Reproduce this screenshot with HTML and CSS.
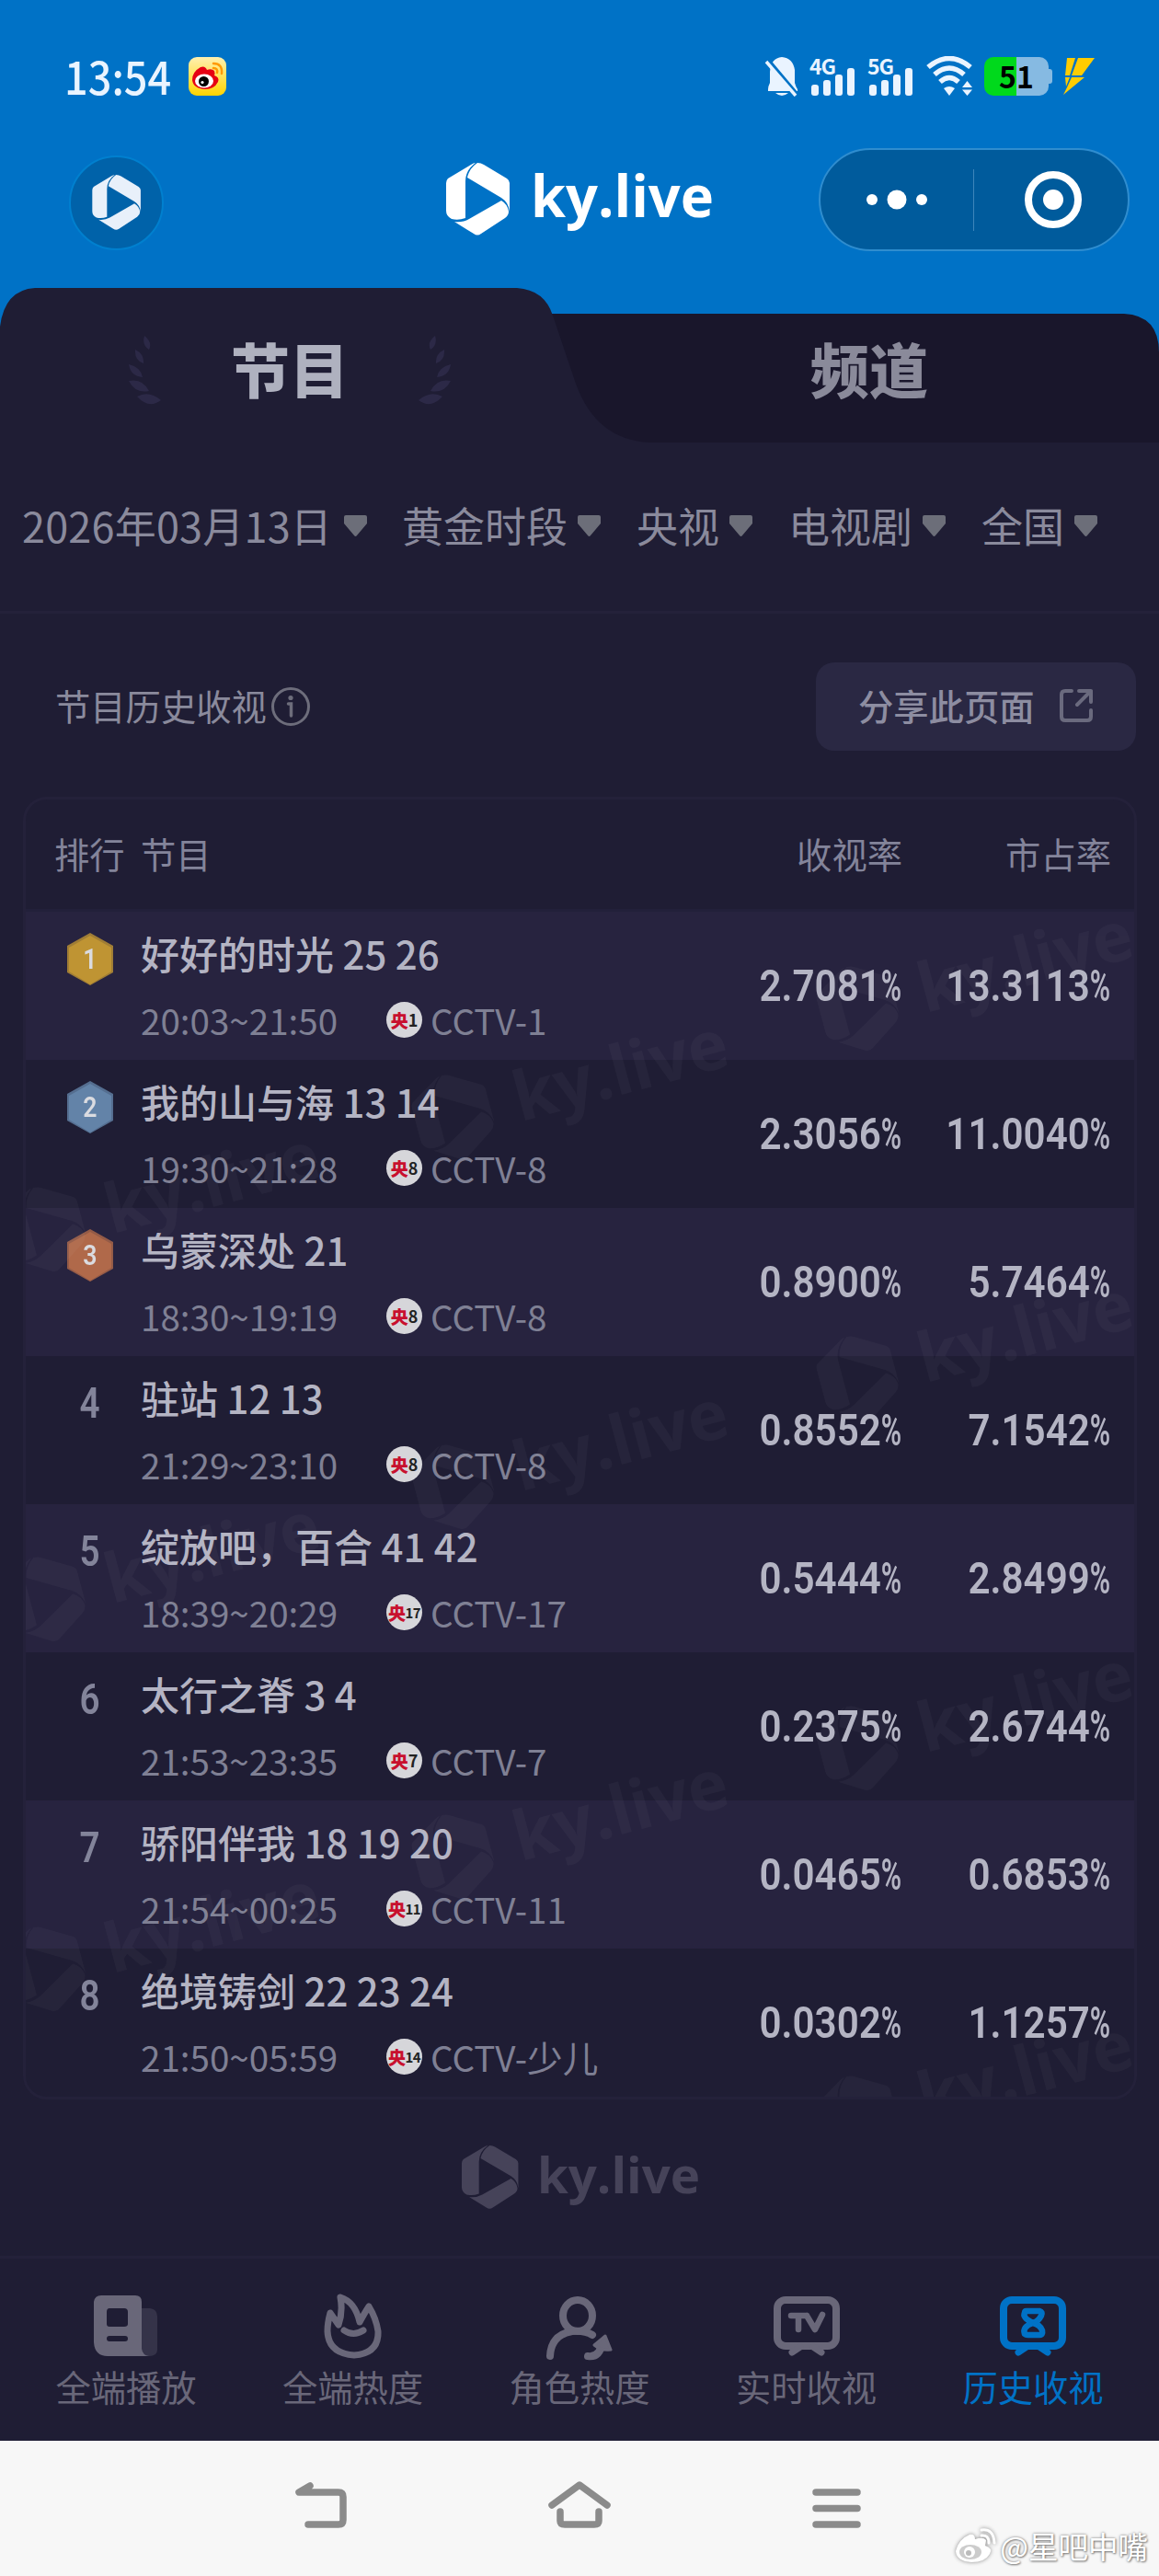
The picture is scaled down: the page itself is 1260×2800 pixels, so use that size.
FILE: index.html
```
<!DOCTYPE html>
<html lang="zh-CN">
<head>
    <meta charset="UTF-8">
    <meta name="viewport" content="width=device-width, initial-scale=1.0">
    <title>ky.live 历史收视</title>
    <link rel="stylesheet" href="styles.css">
</head>
<body>

    <!-- shared shapes -->
    <svg class="defs" width="0" height="0">
        <symbol id="mark" viewBox="0 0 70 80">
            <path d="M0 22Q0 19 2 17L27 2Q30 0 32 0Q21 8 21 20V60Q13 63 6 61Q0 58 0 52Z"/>
            <path d="M34 0Q38 0 41 2L66 17Q69 19 69 22V53Q68 43 60 38L23 16Q25 6 34 0Z"/>
            <path d="M60 41Q67 45 68 53Q68 57 64 60L38 77Q34 80 30 77L9 64Q18 65 25 61Z"/>
        </symbol>
        <symbol id="logo" viewBox="0 0 292 80">
            <use href="#mark" width="70" height="80"/>
            <text class="logo-text" x="92" y="59" textLength="199" lengthAdjust="spacingAndGlyphs">ky.live</text>
        </symbol>
        <symbol id="laurel" viewBox="0 0 36 76">
            <path d="M17 0q9 7 5 15q-8-5-5-15zM7 15q10 5 9 15Q6 27 7 15zM0 31q13 3 15 14Q2 44 0 31zM0 49q15-3 22 11Q7 63 0 49zM9 66q13-7 26 4Q22 80 9 66z"/>
        </symbol>
        <symbol id="hex" viewBox="0 0 52 58">
            <path class="hex-edge" d="M26 0L51 14V43L26 57L1 43V14Z"/>
            <path d="M26 3L49 16V42L26 56L3 42V16Z"/>
        </symbol>
        <symbol id="drop" viewBox="0 0 25 24">
            <path d="M2 1H23Q25 1 25 3V10L14 23Q12.500 25 11 23L0 10V3Q0 1 2 1Z"/>
        </symbol>
        <symbol id="bars" viewBox="0 0 50 44">
            <rect x="2" y="31" width="8" height="12" rx="3"/>
            <rect x="15" y="26" width="8" height="17" rx="3"/>
            <rect x="28" y="20" width="8" height="23" rx="3"/>
            <rect x="41" y="13" width="8" height="30" rx="3"/>
        </symbol>
        <symbol id="tv" viewBox="0 0 72 66">
            <rect x="4" y="5" width="64" height="50" rx="9" fill="none" stroke-width="8"/>
            <path d="M20 62L29 56M52 62L43 56" fill="none" stroke-width="7" stroke-linecap="round"/>
        </symbol>
    </svg>

    <header>
        <div class="status">
            <span class="time">13:54</span>
            <svg class="weibo" width="41" height="42" viewBox="0 0 41 42">
                <defs>
                    <linearGradient id="gold" x1="0" y1="0" x2="0" y2="1">
                        <stop offset="0" stop-color="#fff0b0"/>
                        <stop offset="1" stop-color="#ffd400"/>
                    </linearGradient>
                </defs>
                <rect width="41" height="42" rx="9" fill="url(#gold)"/>
                <path d="M4 25Q4 16 13 11Q18 9 20 14Q25 12 28 15Q29 18 28 20Q34 22 32 27Q28 35 18 35Q5 34 4 25Z" fill="#e60012"/>
                <ellipse cx="17" cy="26" rx="10" ry="7.500" fill="#fff"/>
                <circle cx="16.500" cy="26.500" r="5.500"/>
                <circle cx="15" cy="27.500" r="1.600" fill="#fff"/>
                <path d="M27 7Q37 7 36 18M27 12Q32 12 31 17" fill="none" stroke="#f90" stroke-width="2.500" stroke-linecap="round"/>
            </svg>
            <div class="signals">
                <svg class="bell" width="38" height="44" viewBox="0 0 38 44">
                    <path d="M4 36Q4 33 6 29V17Q7 2 19 1Q31 2 33 15V29Q34 33 36 36V38H4ZM12 40H26Q19 46 12 40Z"/>
                    <path class="slash-gap" d="M4 4L36 42"/>
                    <path class="slash" d="M2 6L34 43"/>
                </svg>
                <span class="net"><b>4G</b><svg width="50" height="44"><use href="#bars"/></svg></span>
                <span class="net"><b>5G</b><svg width="50" height="44"><use href="#bars"/></svg></span>
                <svg class="wifi" width="54" height="44" viewBox="0 0 54 44">
                    <path d="M3 12Q26-7 49 12M10 20Q26 6 42 20M16 28Q26 19 36 28" fill="none" stroke="#eaf4ff" stroke-width="5.500"/>
                    <path d="M20 35Q26 31 32 35L26 43ZM40 34L45.500 27L51 34ZM40 36.500H51L45.500 43Z"/>
                </svg>
                <span class="battery">51</span>
                <svg width="36" height="42" viewBox="0 0 36 42" fill="#fc0">
                    <path d="M5 1H14L8 20H3ZM17 1H35L21 20H10ZM3 22H8L4 32ZM10 22H24L1 41L5 33Z"/>
                </svg>
            </div>
        </div>

        <div class="nav">
            <span class="avatar"><svg width="54" height="61"><use href="#mark"/></svg></span>
            <svg class="brand" width="292" height="80"><use href="#logo"/></svg>
            <div class="capsule">
                <svg width="66" height="24" viewBox="0 0 66 24">
                    <circle cx="6" cy="12" r="6"/>
                    <circle cx="33" cy="12" r="10.500"/>
                    <circle cx="60" cy="12" r="6"/>
                </svg>
                <i></i>
                <svg width="62" height="62" viewBox="0 0 62 62">
                    <circle cx="31" cy="31" r="27" fill="none" stroke="#fff" stroke-width="8"/>
                    <circle cx="31" cy="31" r="11"/>
                </svg>
            </div>
        </div>

        <div class="tabs">
            <svg class="tabs-bg" width="1260" height="168" viewBox="0 0 1260 168">
                <path fill="#19162b" d="M560 28H1222Q1260 30 1260 70V168H560Z"/>
                <path fill="#1f1d34" d="M0 168V42Q5 2 38 0H562Q592 2 601 30L626 104Q648 165 706 168Z"/>
            </svg>
            <div class="tab active">
                <svg width="36" height="76"><use href="#laurel"/></svg>
                <span>节目</span>
                <svg class="flip" width="36" height="76"><use href="#laurel"/></svg>
            </div>
            <div class="tab"><span>频道</span></div>
        </div>
    </header>

    <main>
        <div class="filters">
            <span class="date">2026年03月13日<svg width="25" height="24"><use href="#drop"/></svg></span>
            <span>黄金时段<svg width="25" height="24"><use href="#drop"/></svg></span>
            <span>央视<svg width="25" height="24"><use href="#drop"/></svg></span>
            <span>电视剧<svg width="25" height="24"><use href="#drop"/></svg></span>
            <span>全国<svg width="25" height="24"><use href="#drop"/></svg></span>
        </div>

        <div class="title-bar">
            <h2>节目历史收视</h2>
            <svg width="44" height="44" viewBox="0 0 44 44">
                <circle cx="22" cy="22" r="19.500" fill="none" stroke="#6d6d7b" stroke-width="3"/>
                <circle cx="22" cy="12.500" r="2.600" fill="#6d6d7b"/>
                <path d="M19.500 19H22.500V32" fill="none" stroke="#6d6d7b" stroke-width="3.500" stroke-linecap="round"/>
            </svg>
            <button class="share">
                分享此页面
                <svg width="38" height="38" viewBox="0 0 38 38">
                    <path d="M14 3H7Q3 3 3 7V31Q3 35 7 35H31Q35 35 35 31V24M22 3H35V15M35 3L20 18"/>
                </svg>
            </button>
        </div>

        <div class="table">
            <div class="thead">
                <span>排行</span>
                <span>节目</span>
                <span>收视率</span>
                <span>市占率</span>
            </div>
            <div class="row">
                <div class="rank medal gold"><svg width="52" height="58"><use href="#hex"/></svg><b>1</b></div>
                <div class="show">
                    <h3>好好的时光 25 26</h3>
                    <p><span>20:03~21:50</span><i class="badge"><b>央</b>1</i>CCTV-1</p>
                </div>
                <div class="num">2.7081<em>%</em></div>
                <div class="num">13.3113<em>%</em></div>
            </div>
            <div class="row">
                <div class="rank medal silver"><svg width="52" height="58"><use href="#hex"/></svg><b>2</b></div>
                <div class="show">
                    <h3>我的山与海 13 14</h3>
                    <p><span>19:30~21:28</span><i class="badge"><b>央</b>8</i>CCTV-8</p>
                </div>
                <div class="num">2.3056<em>%</em></div>
                <div class="num">11.0040<em>%</em></div>
            </div>
            <div class="row">
                <div class="rank medal bronze"><svg width="52" height="58"><use href="#hex"/></svg><b>3</b></div>
                <div class="show">
                    <h3>乌蒙深处 21</h3>
                    <p><span>18:30~19:19</span><i class="badge"><b>央</b>8</i>CCTV-8</p>
                </div>
                <div class="num">0.8900<em>%</em></div>
                <div class="num">5.7464<em>%</em></div>
            </div>
            <div class="row">
                <div class="rank">4</div>
                <div class="show">
                    <h3>驻站 12 13</h3>
                    <p><span>21:29~23:10</span><i class="badge"><b>央</b>8</i>CCTV-8</p>
                </div>
                <div class="num">0.8552<em>%</em></div>
                <div class="num">7.1542<em>%</em></div>
            </div>
            <div class="row">
                <div class="rank">5</div>
                <div class="show">
                    <h3>绽放吧，百合 41 42</h3>
                    <p><span>18:39~20:29</span><i class="badge two"><b>央</b>17</i>CCTV-17</p>
                </div>
                <div class="num">0.5444<em>%</em></div>
                <div class="num">2.8499<em>%</em></div>
            </div>
            <div class="row">
                <div class="rank">6</div>
                <div class="show">
                    <h3>太行之脊 3 4</h3>
                    <p><span>21:53~23:35</span><i class="badge"><b>央</b>7</i>CCTV-7</p>
                </div>
                <div class="num">0.2375<em>%</em></div>
                <div class="num">2.6744<em>%</em></div>
            </div>
            <div class="row">
                <div class="rank">7</div>
                <div class="show">
                    <h3>骄阳伴我 18 19 20</h3>
                    <p><span>21:54~00:25</span><i class="badge two"><b>央</b>11</i>CCTV-11</p>
                </div>
                <div class="num">0.0465<em>%</em></div>
                <div class="num">0.6853<em>%</em></div>
            </div>
            <div class="row">
                <div class="rank">8</div>
                <div class="show">
                    <h3>绝境铸剑 22 23 24</h3>
                    <p><span>21:50~05:59</span><i class="badge two"><b>央</b>14</i>CCTV-少儿</p>
                </div>
                <div class="num">0.0302<em>%</em></div>
                <div class="num">1.1257<em>%</em></div>
            </div>

            <!-- tiled watermark over the rows -->
            <svg class="watermark" width="1205" height="1288" viewBox="28 991 1205 1288">
                <g id="wm">
                    <use href="#logo" width="350" height="96" x="-42" y="-48" transform="translate(50 1337) rotate(-15)"/>
                    <use href="#logo" width="350" height="96" x="-42" y="-48" transform="translate(494 1215) rotate(-15)"/>
                    <use href="#logo" width="350" height="96" x="-42" y="-48" transform="translate(934 1097) rotate(-15)"/>
                </g>
                <use href="#wm" y="402"/>
                <use href="#wm" y="804"/>
                <use href="#wm" y="1206"/>
            </svg>
        </div>

        <div class="copyright"><svg width="260" height="70" viewBox="0 0 292 80" preserveAspectRatio="none"><use href="#logo" width="292" height="80"/></svg></div>
    </main>

    <nav class="tabbar">
        <a>
            <svg width="72" height="86" viewBox="0 0 72 86">
                <path d="M50 29H62Q70 30 70 38V74Q70 81 61 81H50Z" opacity=".3"/>
                <path fill-rule="evenodd" d="M9 15H46Q53 15 53 22V73Q54 80 61 81H16Q2 81 1 66V22Q2 15 9 15ZM18 29Q15 29 15 33V46Q15 49 18 49H34Q38 49 38 46V33Q38 29 34 29ZM18 59Q15 59 15 62Q15 65 18 65H35Q38 65 38 62Q38 59 35 59Z"/>
            </svg>
            全端播放
        </a>
        <a>
            <svg width="72" height="86" viewBox="0 0 72 86">
                <path class="line flame" d="M22 17Q38 22 43 44Q49 33 53 27Q61 40 63 54Q64 78 37 80Q9 78 8 54Q8 45 11 34L20 47Q25 33 22 17ZM26 53Q36 60 47 53"/>
            </svg>
            全端热度
        </a>
        <a>
            <svg width="72" height="86" viewBox="0 0 72 86">
                <ellipse class="line" cx="34" cy="37" rx="16" ry="17"/>
                <path class="line" d="M4 81Q5 58 28 54Q42 53 50 58M45 81Q58 83 61 66"/>
                <path d="M64 59L70 74Q59 75 52 69Z" stroke="currentColor" stroke-linejoin="round" stroke-width="3"/>
            </svg>
            角色热度
        </a>
        <a>
            <svg width="72" height="86" viewBox="0 0 72 86">
                <use href="#tv" y="15" width="72" height="66"/>
                <path class="line thin" d="M19 37H36M27 37V52M36 37L45 52L53 36"/>
            </svg>
            实时收视
        </a>
        <a class="current">
            <svg width="72" height="86" viewBox="0 0 72 86">
                <use href="#tv" y="15" width="72" height="66"/>
                <path class="line thin" d="M29 32H43Q47 33 45 37Q42 43 36 45Q24 49 27 57Q28 58 31 58H43Q47 58 46 53Q44 47 36 45Q24 39 27 34Q27 32 29 32Z"/>
            </svg>
            历史收视
        </a>
    </nav>

    <footer>
        <svg width="60" height="56" viewBox="0 0 60 56">
            <path d="M17 8L5 15H48Q53 15 53 20V45Q53 50 48 50H15"/>
        </svg>
        <svg width="70" height="56" viewBox="0 0 70 56">
            <path d="M5 29L35 7L65 29M14 36V46Q14 50 19 50H51Q56 50 56 46V36"/>
        </svg>
        <svg width="60" height="56" viewBox="0 0 60 56">
            <path d="M7 15H52M7 32.500H52M7 50H52"/>
        </svg>
        <div class="author">
            <svg width="45" height="40" viewBox="0 0 45 40">
                <path fill="#fff" d="M1 26Q4 13 16 8Q22 7 22 13Q31 10 34 14L33 20Q42 23 38 29Q33 38 18 38Q2 37 1 26Z"/>
                <ellipse cx="17" cy="27" rx="12" ry="8" fill="#ccc"/>
                <circle cx="16" cy="27" r="6" fill="#fff"/>
                <circle cx="15" cy="28" r="3" fill="#bbb"/>
                <path d="M29 3Q42 1 43 17M29 9Q37 8 37 17" fill="none" stroke="#fff" stroke-width="3" stroke-linecap="round"/>
            </svg>
            @星吧中嘴
        </div>
    </footer>

</body>
</html>
```
FILE: styles.css
```
* {
    margin: 0;
    padding: 0;
    box-sizing: border-box;
}

body {
    width: 1260px;
    background-color: #1f1d34;
    color: #8a8a9c;
    font-family: "Noto Sans CJK SC", sans-serif;
    overflow: hidden;
}

svg {
    display: block;
    flex: none;
}

.defs {
    display: none;
}

.logo-text {
    font: bold 62px "Open Sans", "Noto Sans", sans-serif;
}

header {
    background-color: #0072c6;
}

/* status bar */
.status {
    display: flex;
    align-items: center;
    height: 121px;
    padding: 45px 69px 0 70px;
}

.time {
    margin-right: 9px;
    padding-bottom: 3px;
    color: #eaf4ff;
    font: 500 49px/60px "Noto Sans CJK SC", sans-serif;
    transform: scaleX(.92);
    transform-origin: left;
}

.signals {
    display: flex;
    align-items: center;
    margin-left: auto;
    fill: #eaf4ff;
}

.bell {
    margin-right: 11px;
}

.slash {
    stroke: #eaf4ff;
    stroke-width: 3.5;
}

.slash-gap {
    stroke: #0072c6;
    stroke-width: 4;
}

.net {
    position: relative;
    width: 50px;
    margin-right: 13px;
}

.net b {
    position: absolute;
    top: -7px;
    left: 0;
    color: #eaf4ff;
    font: 700 23px/34px "Noto Sans CJK SC", sans-serif;
    letter-spacing: -1px;
}

.wifi {
    margin-right: 10px;
}

.battery {
    position: relative;
    width: 70px;
    height: 42px;
    margin-right: 15px;
    border-radius: 10px;
    background: linear-gradient(90deg, #00d91c 50%, #86bae2 50%);
    color: #000;
    text-align: center;
    font: 600 32px/40px "Noto Sans CJK SC", sans-serif;
}

.battery::after {
    content: "";
    position: absolute;
    right: -4px;
    top: 13px;
    width: 4px;
    height: 16px;
    border-radius: 0 3px 3px 0;
    background-color: #86bae2;
}

/* brand bar */
.nav {
    display: flex;
    align-items: center;
    height: 192px;
    padding: 0 32px 0 75px;
}

.avatar {
    display: flex;
    align-items: center;
    justify-content: center;
    width: 103px;
    height: 103px;
    margin-top: 6px;
    border: 2px solid #0080cf;
    border-radius: 50%;
    background-color: #0062a9;
    fill: #e8f0fa;
}

.brand {
    margin-left: 307px;
    fill: #fff;
}

.capsule {
    display: flex;
    align-items: center;
    width: 338px;
    height: 112px;
    margin-left: auto;
    padding: 0 50px;
    border: 2px solid #2f8dcf;
    border-radius: 56px;
    background-color: #005b9c;
    fill: #fff;
}

.capsule i {
    width: 2px;
    height: 67px;
    margin: 0 55px 0 50px;
    background-color: #3d86bb;
}

/* tabs */
.tabs {
    position: relative;
    display: grid;
    grid-template-columns: 1fr 1fr;
    height: 168px;
}

.tabs-bg {
    position: absolute;
    left: 0;
    top: 0;
}

.tab {
    position: relative;
    display: flex;
    align-items: center;
    justify-content: center;
    padding-top: 12px;
    gap: 75px;
    fill: #2c2947;
    color: #8a8a9a;
    font-size: 64px;
    font-weight: 900;
    line-height: 1;
}

.tab span {
    padding-bottom: 8px;
}

.active {
    color: #afb1bf;
}

.flip {
    transform: scaleX(-1);
}

/* filters */
.filters {
    display: flex;
    align-items: center;
    gap: 40px;
    height: 186px;
    padding: 0 0 0 24px;
    border-bottom: 3px solid #24213a;
    fill: #6c6e79;
    font-size: 45px;
    line-height: 60px;
}

.filters span {
    display: flex;
    align-items: center;
    gap: 11px;
    margin-right: -1px;
    padding-bottom: 3px;
    white-space: nowrap;
}

.filters .date {
    gap: 13px;
    margin-right: -2px;
    letter-spacing: .2px;
}

.title-bar {
    display: flex;
    align-items: center;
    height: 199px;
    padding: 2px 25px 0 60px;
}

h2 {
    margin: -3px 4px 0 0;
    font-size: 38.300px;
    font-weight: 400;
}

.share {
    display: flex;
    align-items: center;
    width: 348px;
    height: 96px;
    margin-left: auto;
    padding: 0 0 2px 46px;
    gap: 26px;
    border: 0;
    border-radius: 20px;
    background-color: #2a2843;
    color: #8d8da1;
    font: 500 38.300px "Noto Sans CJK SC", sans-serif;
}

.share svg {
    fill: none;
    stroke: #6a6a7e;
    stroke-width: 4;
    stroke-linecap: round;
    stroke-linejoin: round;
}

/* ranking table */
.table {
    position: relative;
    margin: 0 24px 0 25px;
    border: 3px solid #24213a;
    border-radius: 26px;
    overflow: hidden;
}

.thead,
.row {
    display: grid;
    grid-template-columns: 125px 1fr 220px 227px;
    padding-right: 25px;
}

.thead {
    align-items: center;
    height: 122px;
    padding-bottom: 2px;
    border-bottom: 3px solid #22203a;
    color: #83849a;
    font-size: 38.300px;
}

.thead span:first-child {
    padding-left: 31px;
}

.thead span:nth-child(n+3) {
    text-align: right;
}

.row {
    height: 161px;
}

.row:nth-child(even) {
    background-color: #27233f;
}

.rank {
    padding: 25px 0 0 1px;
    width: 138px;
    height: 90px;
    color: #83849a;
    text-align: center;
    font: 600 46px/52px Roboto, sans-serif;
    transform: scaleX(.84);
}

.medal {
    display: grid;
    place-items: center;
    transform: none;
    padding: 13px 0 0 1px;
}

.medal > * {
    grid-area: 1 / 1;
}

.medal b {
    color: #dadbe0;
    font: 600 31px/1 Roboto, sans-serif;
    transform: scaleX(.86);
}

.hex-edge {
    opacity: .8;
}

.gold {
    fill: #bf9433;
}

.silver {
    fill: #6383a8;
}

.bronze {
    fill: #b0694a;
}

.show {
    padding-top: 16px;
    white-space: nowrap;
}

h3 {
    height: 57px;
    color: #b4b4c3;
    font-size: 42px;
    font-weight: 500;
    line-height: 57px;
}

.show p {
    display: flex;
    align-items: center;
    height: 56px;
    margin-top: 16px;
    color: #7f8094;
    font-size: 38.600px;
}

.show p > span {
    width: 267px;
}

.badge {
    display: flex;
    align-items: center;
    justify-content: center;
    width: 39px;
    height: 39px;
    margin-right: 9px;
    border-radius: 50%;
    background-color: #d6d6da;
    color: #222;
    font: 700 18px/1 "Noto Sans CJK SC", sans-serif;
}

.badge b {
    color: #c8102e;
    font-size: 19px;
    font-weight: 900;
}

.two {
    font-size: 15px;
    letter-spacing: -.5px;
}

.num {
    color: #b4b4c3;
    text-align: right;
    font: 600 49px/161px Roboto, sans-serif;
    transform: scaleX(.86);
    transform-origin: right;
    white-space: nowrap;
}

.num em {
    display: inline-block;
    width: 27px;
    font-style: normal;
    text-align: left;
    transform: scaleX(.72);
    transform-origin: left;
}

.watermark {
    position: absolute;
    left: 0;
    bottom: 0;
    fill: #fff;
    opacity: .03;
}

.copyright {
    display: flex;
    justify-content: center;
    align-items: center;
    height: 170px;
    padding-left: 3px;
    fill: #464359;
}

/* bottom tab bar */
.tabbar {
    display: grid;
    grid-template-columns: repeat(5, 246.500px);
    justify-content: center;
    height: 201px;
    border-top: 3px solid #24213a;
    color: #696779;
    font-size: 38.300px;
    line-height: 50px;
    text-align: center;
}

.tabbar a {
    padding-top: 25px;
}

.tabbar svg {
    margin: 0 auto 3px;
    fill: currentColor;
    stroke: none;
}

.tabbar use {
    stroke: currentColor;
}

.line {
    fill: none;
    stroke: currentColor;
    stroke-width: 8;
    stroke-linecap: round;
    stroke-linejoin: round;
}

.thin {
    stroke-width: 6.500;
}

.flame {
    stroke-width: 7;
}

.current {
    color: #0072c6;
}

/* system navigation */
footer {
    position: relative;
    display: flex;
    justify-content: center;
    gap: 215px;
    height: 147px;
    padding-top: 41px;
    background-color: #f7f7f7;
}

footer > svg {
    fill: none;
    stroke: #8b8b8b;
    stroke-width: 7.500;
    stroke-linecap: round;
    stroke-linejoin: round;
}

.author {
    position: absolute;
    right: 12px;
    bottom: 11px;
    display: flex;
    align-items: center;
    gap: 4px;
    color: #fff;
    font-size: 32.500px;
    line-height: 44px;
    text-shadow: 0 0 3px #777, 1px 1px 2px #888;
}

.author svg {
    filter: drop-shadow(0 0 2px #888);
}
```
